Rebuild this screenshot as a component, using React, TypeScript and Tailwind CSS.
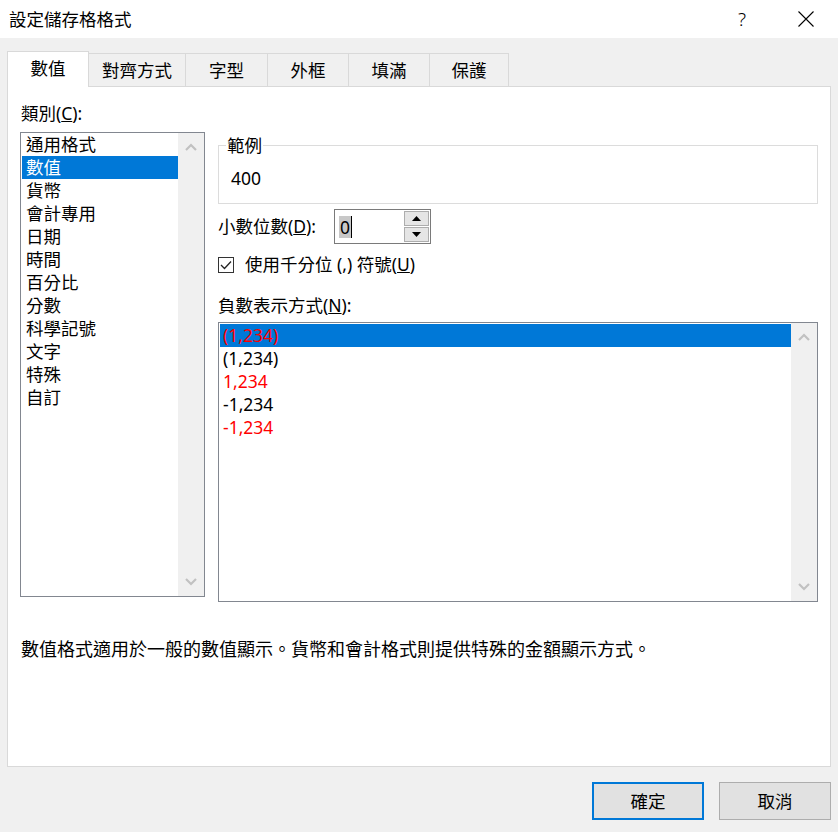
import React from "react";

const categories = [
  "通用格式",
  "數值",
  "貨幣",
  "會計專用",
  "日期",
  "時間",
  "百分比",
  "分數",
  "科學記號",
  "文字",
  "特殊",
  "自訂",
];

const negatives = [
  { text: "(1,234)", red: true },
  { text: "(1,234)", red: false },
  { text: "1,234", red: true },
  { text: "-1,234", red: false },
  { text: "-1,234", red: true },
];

const tabs = [
  { label: "對齊方式", w: "w-[97px]" },
  { label: "字型", w: "w-[82px]" },
  { label: "外框", w: "w-[81px]" },
  { label: "填滿", w: "w-[81px]" },
  { label: "保護", w: "w-[79px]" },
];

function Chevron({ up }: { up?: boolean }) {
  return (
    <svg width="12" height="8" viewBox="0 0 12 8">
      <path
        d={up ? "M1 7 L6 2 L11 7" : "M1 1 L6 6 L11 1"}
        fill="none"
        stroke="#c1c1c1"
        strokeWidth="2.2"
      />
    </svg>
  );
}

function ScrollTrack() {
  return (
    <div className="w-[26px] bg-[#f0f0f0] flex flex-col items-center justify-between py-[10px]">
      <Chevron up />
      <Chevron />
    </div>
  );
}

export default function App() {
  return (
    <div className="w-[838px] h-[832px] bg-[#f0f0f0] flex flex-col text-[17.5px] text-black font-['Segoe_UI','Noto_Sans','Noto_Sans_CJK_TC',sans-serif]">
      {/* Title bar */}
      <div className="h-[38px] bg-white flex items-center pl-[9px] shrink-0">
        <span className="leading-[24px] text-[17.5px]">設定儲存格格式</span>
        <span className="ml-auto mr-[52px] text-[19px] leading-[24px] font-light">?</span>
        <svg width="16" height="16" viewBox="0 0 16 16" className="mr-[24px]">
          <path d="M0.5 0.5 L15.5 15.5 M15.5 0.5 L0.5 15.5" stroke="#000" strokeWidth="1.1" />
        </svg>
      </div>

      {/* Tabs */}
      <div className="mt-[13px] ml-[7px] h-[36px] -mb-px flex relative z-10">
        <div className="w-[82px] h-[36px] bg-white border-l border-t border-r border-[#d9d9d9] flex items-center justify-center pb-[2px]">
          數值
        </div>
        {tabs.map((t) => (
          <div
            key={t.label}
            className={`${t.w} h-[33px] mt-[2px] border-t border-r border-[#d9d9d9] flex items-center justify-center`}
          >
            {t.label}
          </div>
        ))}
      </div>

      {/* Panel */}
      <div className="mx-[7px] h-[681px] bg-white border border-[#d9d9d9] flex flex-col px-[12px] pt-[13px] shrink-0">
        <div className="flex gap-[13px] items-start">
          {/* Left column */}
          <div className="w-[185px] flex flex-col">
            <div className="h-[26px] leading-[26px] pl-[1px] mb-[6px]">
              類別(<span className="underline">C</span>):
            </div>
            <div className="h-[465px] border border-[#828790] flex">
              <div className="flex-1 pl-[1px]">
                {categories.map((c) => (
                  <div
                    key={c}
                    className={`h-[23px] leading-[23px] pl-[4px] ${
                      c === "數值" ? "bg-[#0078d7] text-white" : ""
                    }`}
                  >
                    {c}
                  </div>
                ))}
              </div>
              <ScrollTrack />
            </div>
          </div>

          {/* Right column */}
          <div className="w-[600px] flex flex-col pt-[32px]">
            <div className="relative mt-[13px] h-[59px] border border-[#dcdcdc] flex items-center pl-[12px] pt-[7px]">
              <span className="absolute -top-[14px] left-[7px] bg-white px-[1px] leading-[26px]">
                範例
              </span>
              400
            </div>

            <div className="mt-[5px] h-[35px] flex items-center">
              <span className="w-[116px]">
                小數位數(<span className="underline">D</span>):
              </span>
              <div className="w-[97px] h-[35px] border border-[#7a7a7a] flex items-center pl-[4px] pr-[1px]">
                <span className="bg-[#c8c8c8] h-[22px] leading-[22px] px-[1px] border-r border-black">0</span>
                <div className="ml-auto flex flex-col gap-[1px]">
                  <div className="w-[25px] h-[15px] bg-[#e5e5e5] border border-[#adadad] flex items-center justify-center">
                    <svg width="9" height="5" viewBox="0 0 9 5">
                      <path d="M0 5 L4.5 0 L9 5 Z" fill="#000" />
                    </svg>
                  </div>
                  <div className="w-[25px] h-[15px] bg-[#e5e5e5] border border-[#adadad] flex items-center justify-center">
                    <svg width="9" height="5" viewBox="0 0 9 5">
                      <path d="M0 0 L4.5 5 L9 0 Z" fill="#000" />
                    </svg>
                  </div>
                </div>
              </div>
            </div>

            <div className="mt-[8px] h-[25px] flex items-center">
              <div className="w-[16px] h-[16px] border border-[#333] flex items-center justify-center">
                <svg width="12" height="10" viewBox="0 0 12 10">
                  <path d="M1 5 L4.5 8.5 L11 1.5" fill="none" stroke="#222" strokeWidth="1.3" />
                </svg>
              </div>
              <span className="ml-[11px]">
                使用千分位 (,) 符號(<span className="underline">U</span>)
              </span>
            </div>

            <div className="mt-[15px] h-[26px] leading-[26px]">
              負數表示方式(<span className="underline">N</span>):
            </div>

            <div className="mt-[4px] h-[280px] border border-[#828790] flex">
              <div className="flex-1 pt-[1px] pl-[1px]">
                {negatives.map((n, i) => (
                  <div
                    key={i}
                    className={`h-[23px] leading-[23px] pl-[3px] ${
                      i === 0 ? "bg-[#0078d7]" : ""
                    } ${n.red ? "text-[#ff0000]" : ""}`}
                  >
                    {n.text}
                  </div>
                ))}
              </div>
              <ScrollTrack />
            </div>
          </div>
        </div>

        <div className="mt-[34px] h-[24px] leading-[24px] pl-[1px] text-[18px] font-['Noto_Sans_CJK_TC',sans-serif]">
          數值格式適用於一般的數值顯示。貨幣和會計格式則提供特殊的金額顯示方式。
        </div>
      </div>

      {/* Buttons */}
      <div className="mt-[15px] mr-[7px] flex justify-end gap-[15px]">
        <button className="w-[112px] h-[38px] bg-[#e1e1e1] border-2 border-[#0078d7]">確定</button>
        <button className="w-[112px] h-[38px] bg-[#e1e1e1] border border-[#adadad]">取消</button>
      </div>
    </div>
  );
}
